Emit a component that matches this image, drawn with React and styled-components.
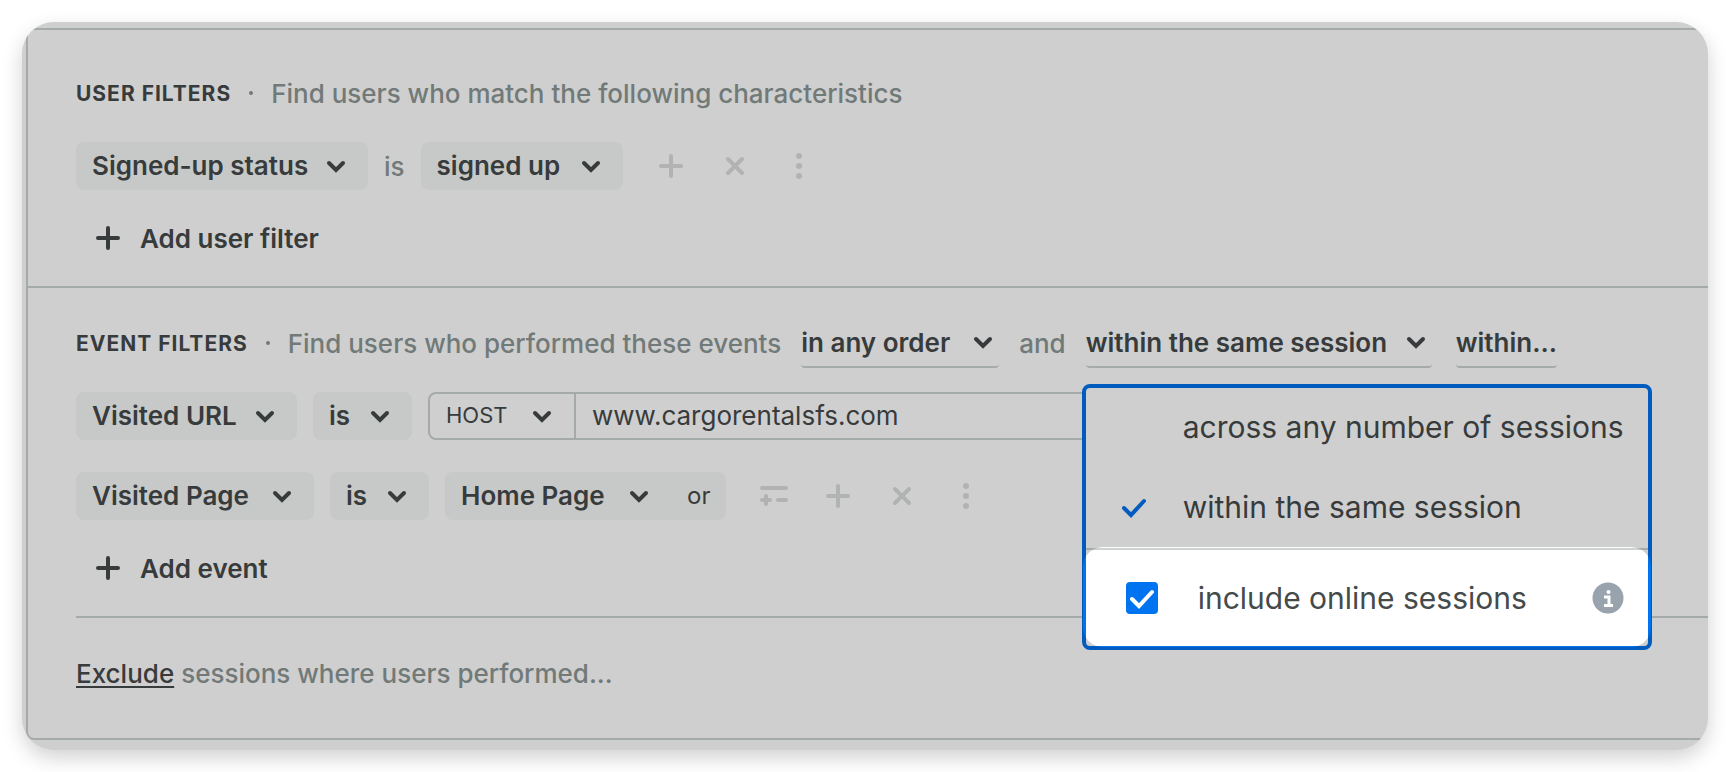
import { useState } from "react";
import styled, { createGlobalStyle } from "styled-components";

const GlobalStyle = createGlobalStyle`
  * {
    box-sizing: border-box;
  }

  body {
    margin: 0;
    background: #fff;
    font-family: Inter, "Liberation Sans", sans-serif;
    color: #373b3c;
  }

  button, input, select {
    font: inherit;
    color: inherit;
  }
`;

const Page = styled.main`
  padding: 22px;
`;

const Card = styled.div`
  overflow: hidden;
  padding: 6px 0 10px 4px;
  background: #cfcfcf;
  border-radius: 32px;
  box-shadow: 0 8px 20px rgba(0, 0, 0, 0.18);
`;

const Panel = styled.div`
  border: 2px solid #a5abaa;
  border-right: 0;
  border-radius: 0 0 0 8px;
`;

const Section = styled.section`
  padding: 32px 0 24px 48px;

  & + & {
    border-top: 2px solid #a5abaa;
    padding: 24px 0 0 48px;
  }
`;

const Heading = styled.div`
  display: flex;
  align-items: center;
  height: 64px;
  padding-bottom: 2px;
  white-space: nowrap;
`;

const Title = styled.h2`
  margin: 0;
  font-size: 21px;
  font-weight: 700;
  letter-spacing: 1px;
`;

const Dot = styled.span`
  width: 4px;
  height: 4px;
  margin: 0 18px;
  border-radius: 50%;
  background: #717a78;
`;

const Muted = styled.span`
  font-size: 26px;
  font-weight: 500;
  color: #717a78;
`;

const Row = styled.div`
  display: flex;
  align-items: center;
  gap: 16px;
  margin-top: ${(props) => props.$top || 0}px;
`;

// Select and chevron share one grid cell
const SelectBox = styled.label`
  display: grid;
  align-items: center;
  width: ${(props) => props.$width}px;
  height: 48px;
  border-radius: 8px;
  background: ${(props) => (props.$plain ? "transparent" : "#c7c9c8")};

  select, svg {
    grid-area: 1 / 1;
  }

  select {
    width: 100%;
    height: 100%;
    padding: 0 40px 2px 16px;
    border: 0;
    background: none;
    appearance: none;
    font-size: ${(props) => (props.$plain ? 22 : 26)}px;
    font-weight: ${(props) => (props.$plain ? 400 : 600)};
  }

  svg {
    justify-self: end;
    margin-right: 20px;
    pointer-events: none;
  }
`;

const PageGroup = styled.div`
  display: flex;
  align-items: center;
  padding-right: 16px;
  border-radius: 8px;
  background: #c7c9c8;
`;

const OrButton = styled.button`
  margin-left: 16px;
  padding: 0 0 2px;
  border: 0;
  background: none;
  font-size: 24px;
`;

const UrlField = styled.div`
  display: flex;
  flex: 0 1 1100px;
  height: 48px;
  border: 2px solid #a5abaa;
  border-radius: 8px;

  label {
    height: 44px;
  }

  input {
    flex: 1;
    min-width: 0;
    padding: 0 16px 2px;
    border: 0;
    border-left: 2px solid #a5abaa;
    background: none;
    font-size: 26px;
  }
`;

const Tools = styled.div`
  display: flex;
  gap: 32px;
  margin-left: 16px;
  color: #b1b3b2;
`;

const ToolButton = styled.button`
  display: flex;
  padding: 0;
  border: 0;
  background: none;
  color: inherit;
`;

const AddButton = styled.button`
  display: flex;
  align-items: center;
  gap: 16px;
  height: 48px;
  margin-top: 24px;
  padding: 0 16px;
  border: 0;
  background: none;
  font-size: 26px;
  font-weight: 600;
`;

const Picker = styled.div`
  position: relative;
  margin-left: ${(props) => props.$gap}px;
`;

const PickerButton = styled.button`
  display: flex;
  align-items: center;
  justify-content: space-between;
  min-width: ${(props) => props.$width}px;
  height: 50px;
  padding: 0;
  border: 0;
  border-bottom: 2px solid #a5abaa;
  border-radius: 4px;
  background: none;
  font-size: 26px;
  font-weight: 600;

  svg {
    margin-right: 4px;
  }
`;

const Joiner = styled(Muted)`
  margin-left: 20px;
`;

const Menu = styled.div`
  position: absolute;
  z-index: 2;
  top: calc(100% + 16px);
  left: -4px;
  width: 570px;
  border: 4px solid #005cbf;
  border-radius: 8px;
  background: #cfcfcf;
  font-size: 30px;
`;

const Option = styled.button`
  display: grid;
  grid-template-columns: 61px 1fr;
  align-items: center;
  width: 100%;
  height: 80px;
  padding: 0 0 2px 36px;
  border: 0;
  background: none;
  text-align: left;

  svg {
    color: #005cbf;
  }
`;

const MenuFooter = styled.div`
  position: relative;
  display: flex;
  align-items: center;
  height: 98px;
  padding: 0 24px 0 40px;
  border-top: 2px solid #a5abaa;
`;

// Bright area over the last row, it also lights up the menu border
const Spotlight = styled.span`
  position: absolute;
  inset: -3px -3px -1px;
  border-radius: 20px;
  background:
    linear-gradient(90deg, #0074f0 3px, transparent 3px calc(100% - 3px), #0074f0 calc(100% - 3px)),
    linear-gradient(#fff 1px, #cfd2d2 1px 3px, #fff 3px calc(100% - 1px), #0074f0 calc(100% - 1px));
`;

const CheckLabel = styled.label`
  position: relative;
  display: flex;
  flex: 1;
  align-items: center;
  gap: 40px;
  color: #454a4b;
`;

const CheckBox = styled.span`
  display: grid;
  width: 32px;
  height: 32px;

  input, svg {
    grid-area: 1 / 1;
  }

  input {
    width: 32px;
    height: 32px;
    margin: 0;
    appearance: none;
    border: 2px solid #0073f0;
    border-radius: 4px;
  }

  input:checked {
    background: #0073f0;
  }

  svg {
    place-self: center;
    color: #fff;
    pointer-events: none;
  }
`;

const InfoButton = styled(ToolButton)`
  position: relative;
`;

const Exclude = styled.div`
  display: flex;
  align-items: center;
  gap: 7px;
  height: 122px;
  margin-top: 24px;
  padding-bottom: 10px;
  border-top: 2px solid #a5abaa;

  button {
    padding: 0;
    border: 0;
    background: none;
    font-size: 26px;
    font-weight: 500;
    text-decoration: underline;
    text-decoration-thickness: 2px;
    text-underline-offset: 3px;
  }
`;

const Chevron = () => (
  <svg width="24" height="24" viewBox="0 0 24 24" fill="none" stroke="currentColor" strokeWidth="4" strokeLinecap="round" strokeLinejoin="miter">
    <path d="M5 9l7 7 7-7" />
  </svg>
);

const Plus = () => (
  <svg width="32" height="32" viewBox="0 0 32 32" fill="none" stroke="currentColor" strokeWidth="4" strokeLinecap="round">
    <path d="M16 6v20M6 16h20" />
  </svg>
);

const Cross = () => (
  <svg width="32" height="32" viewBox="0 0 32 32" fill="none" stroke="currentColor" strokeWidth="4" strokeLinecap="round">
    <path d="M9 9l14 14M23 9L9 23" />
  </svg>
);

const Dots = () => (
  <svg width="32" height="32" viewBox="0 0 32 32" fill="currentColor">
    <circle cx="16" cy="6" r="3" />
    <circle cx="16" cy="16" r="3" />
    <circle cx="16" cy="26" r="3" />
  </svg>
);

const Property = () => (
  <svg width="32" height="32" viewBox="0 0 32 32" fill="none" stroke="currentColor" strokeWidth="4" strokeLinecap="round">
    <path d="M4 8h24M4 20h8M8 16v8M20 20h8" />
  </svg>
);

const Check = () => (
  <svg width="24" height="24" viewBox="0 0 24 24" fill="none" stroke="currentColor" strokeWidth="4" strokeLinecap="round">
    <path d="M2 13l7 7L22 6" />
  </svg>
);

const InfoIcon = () => (
  <svg width="32" height="32" viewBox="0 0 32 32">
    <circle cx="16" cy="16" r="15.5" fill="#98a3ae" />
    <circle cx="16.5" cy="10" r="2" fill="#fff" />
    <path d="M12 15h5v8M12 23.500h9" fill="none" stroke="#fff" strokeWidth="3" />
  </svg>
);

function Dropdown({ label, value, width, plain }) {
  return (
    <SelectBox $width={width} $plain={plain}>
      <select aria-label={label} defaultValue={value}>
        <option>{value}</option>
      </select>
      <Chevron />
    </SelectBox>
  );
}

function RowTools({ withProperty }) {
  return (
    <Tools>
      {withProperty && (
        <ToolButton aria-label="Add property">
          <Property />
        </ToolButton>
      )}
      <ToolButton aria-label="Add">
        <Plus />
      </ToolButton>
      <ToolButton aria-label="Remove">
        <Cross />
      </ToolButton>
      <ToolButton aria-label="More options">
        <Dots />
      </ToolButton>
    </Tools>
  );
}

function SessionMenu() {
  const [online, setOnline] = useState(true);

  return (
    <Menu>
      <Option>
        <span />
        across any number of sessions
      </Option>
      <Option>
        <Check />
        within the same session
      </Option>
      <MenuFooter>
        <Spotlight />
        <CheckLabel>
          <CheckBox>
            <input type="checkbox" checked={online} onChange={(e) => setOnline(e.target.checked)} />
            {online && <Check />}
          </CheckBox>
          include online sessions
        </CheckLabel>
        <InfoButton aria-label="About online sessions">
          <InfoIcon />
        </InfoButton>
      </MenuFooter>
    </Menu>
  );
}

export default function App() {
  return (
    <Page>
      <GlobalStyle />
      <Card>
        <Panel>
          <Section>
            <Heading>
              <Title>USER FILTERS</Title>
              <Dot />
              <Muted>Find users who match the following characteristics</Muted>
            </Heading>
            <Row $top={16}>
              <Dropdown label="User property" value="Signed-up status" width={292} />
              <Muted>is</Muted>
              <Dropdown label="Status" value="signed up" width={202} />
              <RowTools />
            </Row>
            <AddButton>
              <Plus />
              Add user filter
            </AddButton>
          </Section>

          <Section>
            <Heading>
              <Title>EVENT FILTERS</Title>
              <Dot />
              <Muted>Find users who performed these events</Muted>
              <Picker $gap={20}>
                <PickerButton $width={198}>
                  in any order
                  <Chevron />
                </PickerButton>
              </Picker>
              <Joiner>and</Joiner>
              <Picker $gap={20}>
                <PickerButton $width={346} aria-haspopup="true" aria-expanded="true">
                  within the same session
                  <Chevron />
                </PickerButton>
                <SessionMenu />
              </Picker>
              <Picker $gap={24}>
                <PickerButton $width={98}>within...</PickerButton>
              </Picker>
            </Heading>
            <Row $top={16}>
              <Dropdown label="Event" value="Visited URL" width={221} />
              <Dropdown label="Comparison" value="is" width={99} />
              <UrlField>
                <Dropdown label="URL part" value="HOST" width={144} plain />
                <input aria-label="URL" defaultValue="www.cargorentalsfs.com" />
              </UrlField>
            </Row>
            <Row $top={32}>
              <Dropdown label="Event" value="Visited Page" width={238} />
              <Dropdown label="Comparison" value="is" width={99} />
              <PageGroup>
                <Dropdown label="Page" value="Home Page" width={226} />
                <OrButton>or</OrButton>
              </PageGroup>
              <RowTools withProperty />
            </Row>
            <AddButton>
              <Plus />
              Add event
            </AddButton>
            <Exclude>
              <button>Exclude</button>
              <Muted>sessions where users performed...</Muted>
            </Exclude>
          </Section>
        </Panel>
      </Card>
    </Page>
  );
}
